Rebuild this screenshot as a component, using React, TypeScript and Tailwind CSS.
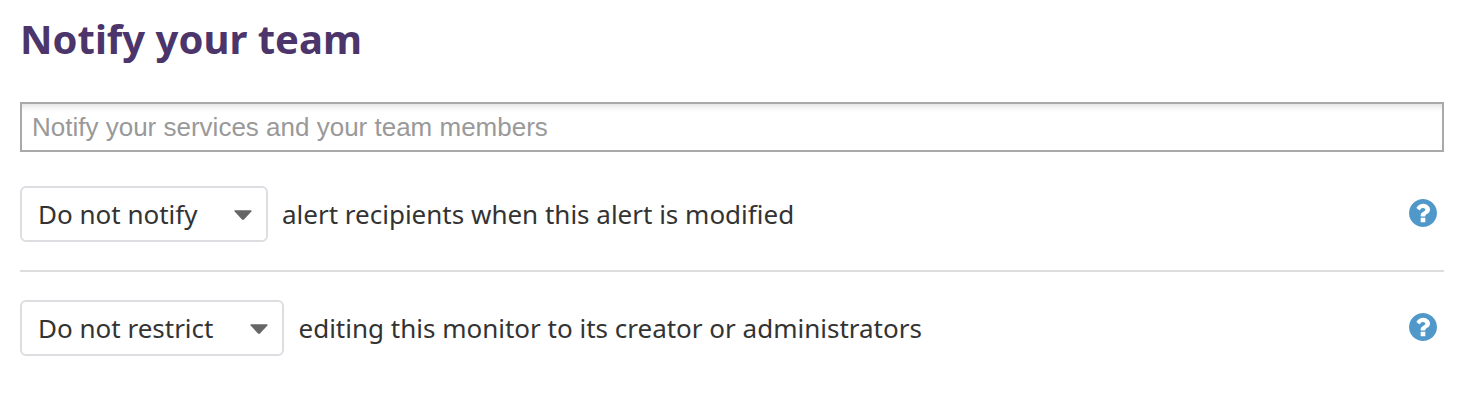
function Help() {
  return (
    <svg className="mr-[7px] mb-0.5 size-7 shrink-0" viewBox="128 128 1536 1536" fill="#4f98c9">
      <path d="M1024 1376v-192q0-14-9-23t-23-9h-192q-14 0-23 9t-9 23v192q0 14 9 23t23 9h192q14 0 23-9t9-23zm256-672q0-88-55.5-163t-138.500-116-170-41q-243 0-371 213-15 24 8 42l132 100q7 6 19 6 16 0 25-12 53-68 86-92 34-24 86-24 48 0 85.500 26t37.500 59q0 38-20 61t-68 45q-63 28-115.500 86.500t-52.500 125.500v36q0 14 9 23t23 9h192q14 0 23-9t9-23q0-19 21.500-49.500t54.500-49.500q32-18 49-28.500t46-35 44.500-48 28-60.500 12.500-81zm384 192q0 209-103 385.500t-279.500 279.500-385.500 103-385.500-103-279.500-279.500-103-385.500 103-385.500 279.500-279.500 385.500-103 385.500 103 279.500 279.500 103 385.500z" />
    </svg>
  );
}

function Select({ label, width }: { label: string; width: string }) {
  return (
    <button className={`flex h-14 shrink-0 items-center justify-between rounded-[6px] border-2 border-[#dddde2] bg-white pr-3.5 pl-4 ${width}`}>
      <span className="whitespace-nowrap">{label}</span>
      <svg className="mt-0.5 h-[10px] w-[18px]" viewBox="0 0 18 10" fill="#666666">
        <path d="M1.200 .2h15.600c.9 0 1.200.8.6 1.400l-7.400 7.900c-.6.6-1.400.6-2 0L.6 1.600C0 1 .3.2 1.200.2z" />
      </svg>
    </button>
  );
}

export default function App() {
  return (
    <main className="h-[410px] bg-white px-5 pt-[15px] pr-7 font-['Noto_Sans',sans-serif] text-[26px] leading-9 text-[#333333]">
      <h1 className="h-[87px] text-[40px] leading-[48px] font-bold text-[#4b356a]">Notify your team</h1>
      <input
        className="block h-[50px] w-full border-2 border-[#a9a9a9] px-[10px] font-['Liberation_Sans',sans-serif] text-[26px] shadow-[inset_0_8px_7px_-6px_#dddddd] placeholder:text-[#999999]"
        placeholder="Notify your services and your team members"
      />
      <section className="mt-[34px] flex h-[86px] items-start border-b-2 border-[#dddddd]">
        <div className="flex h-14 w-full items-center">
          <Select label="Do not notify" width="w-[248px]" />
          <span className="ml-[14px] grow">alert recipients when this alert is modified</span>
          <Help />
        </div>
      </section>
      <section className="mt-7 flex h-14 items-center">
        <Select label="Do not restrict" width="w-[264px]" />
        <span className="ml-[14.5px] grow">editing this monitor to its creator or administrators</span>
        <Help />
      </section>
    </main>
  );
}
